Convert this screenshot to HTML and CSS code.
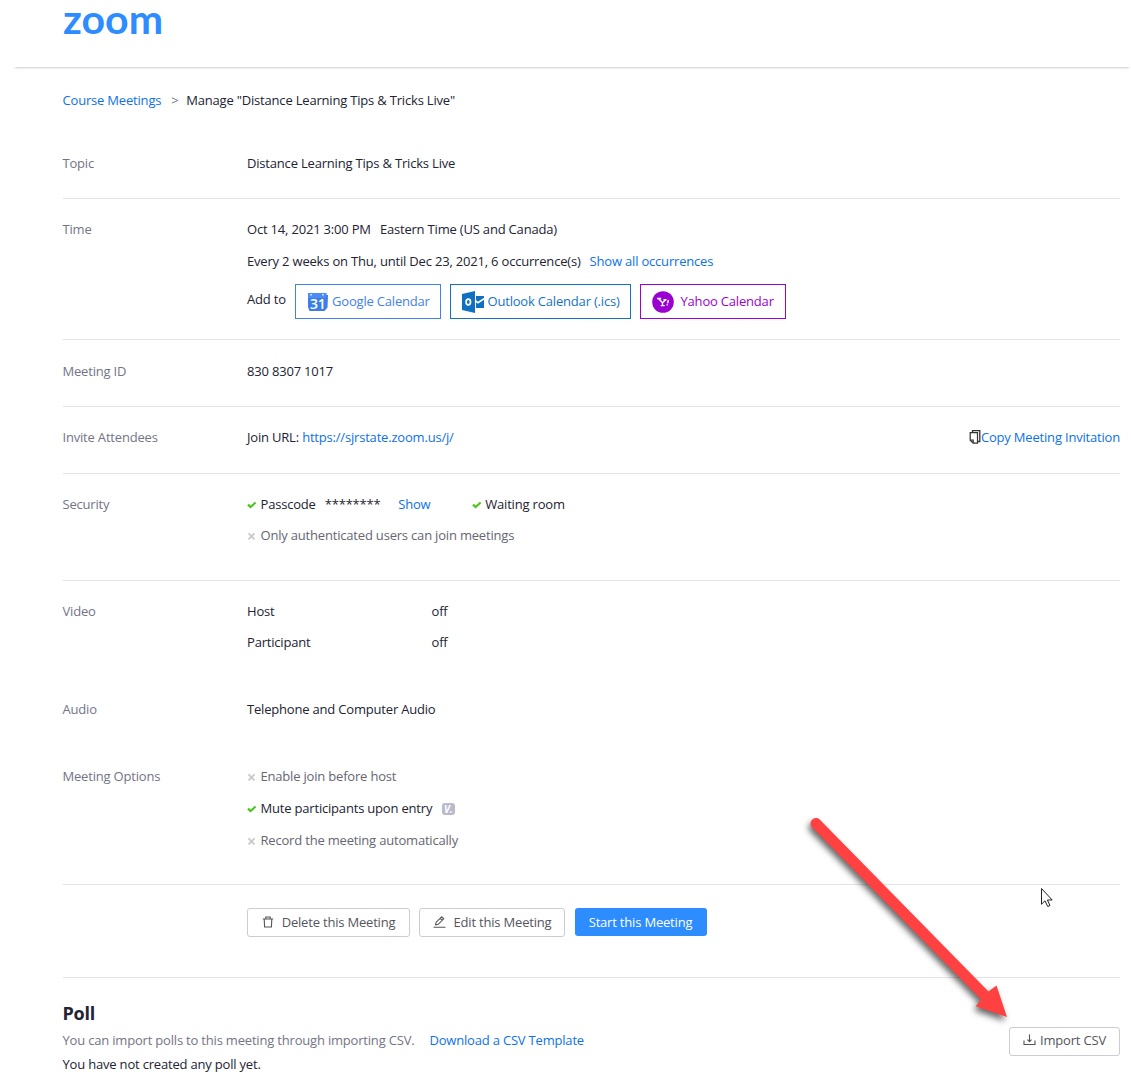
FILE: index.html
```html
<!DOCTYPE html>
<html lang="en">
<head>
<meta charset="UTF-8">
<meta name="viewport" content="width=device-width, initial-scale=1.0">
<title>Manage Meeting</title>
<link rel="stylesheet" href="styles.css">
</head>
<body>
<!-- Shared icons -->
<svg class="icon-defs" width="0" height="0">
<symbol id="check" viewBox="0 0 10 10"><path d="M1 4.600 L3.600 7 L8.600 2.500" fill="none" stroke="#4cc71c" stroke-width="2.200"/></symbol>
<symbol id="cross" viewBox="0 0 10 10"><path d="M1.500 2.300 L7.500 8.300 M7.500 2.300 L1.500 8.300" fill="none" stroke="#c8c8c8" stroke-width="1.700"/></symbol>
</svg>
<header class="header">
<svg class="logo" width="101" height="54" viewBox="0 0 101 54">
<text x="0" y="34" textLength="100" lengthAdjust="spacingAndGlyphs">zoom</text>
</svg>
</header>
<main class="content">
<nav class="breadcrumb">
<a href="#">Course Meetings</a>
<span class="arrow">&gt;</span>
<span>Manage "Distance Learning Tips &amp; Tricks Live"</span>
</nav>
<section class="row topic">
<div class="label">Topic</div>
<div class="value">Distance Learning Tips &amp; Tricks Live</div>
</section>
<section class="row time">
<div class="label">Time</div>
<div class="value">
<div class="line"><span class="date">Oct 14, 2021 3:00 PM</span><span>Eastern Time (US and Canada)</span></div>
<div class="line occurrences"><span class="repeat">Every 2 weeks on Thu, until Dec 23, 2021, 6 occurrence(s)</span><a href="#">Show all occurrences</a></div>
<div class="calendars">
<span class="add">Add to</span>
<a class="cal google" href="#">
<svg width="22" height="20" viewBox="0 0 22 20"><path d="M1 1h18.500v2H21l-.5 12.500-3 3.500H2.500L1 15z" fill="#3b7de9"/><path d="M1 1h18v5H1z" fill="#4c8bf5"/><path d="M4 2v1.500M16 2v1.500" stroke="#fff" stroke-width="1.300"/><text class="cal-day" x="3" y="16.500">31</text></svg>
<span>Google Calendar</span>
</a>
<a class="cal outlook" href="#">
<svg width="22" height="22" viewBox="0 0 22 22"><path d="M0 3L13 0v22L0 19z" fill="#0f70c1"/><path d="M14 5h8v12H14z" fill="#0f70c1"/><path d="M13 9.500l3 2.200 7-4.700" fill="none" stroke="#fff" stroke-width="1.600"/><ellipse cx="6.300" cy="11" rx="2.200" ry="2.900" fill="none" stroke="#fff" stroke-width="1.700"/></svg>
<span>Outlook Calendar (.ics)</span>
</a>
<a class="cal yahoo" href="#">
<svg width="22" height="22" viewBox="0 0 22 22"><circle cx="11" cy="11" r="10.800" fill="#9b00d3"/><path d="M5 7.500h4.200M6.500 7.500l4 4.200 3-2.700M11.500 8.800h3M10.500 11.500v3M8.700 14.600h4" fill="none" stroke="#fff" stroke-width="1.400"/><path d="M16.400 9l-.8 3.400M15.200 13.300v1.200" stroke="#fff" stroke-width="1.400"/></svg>
<span>Yahoo Calendar</span>
</a>
</div>
</div>
</section>
<section class="row meeting-id">
<div class="label">Meeting ID</div>
<div class="value">830 8307 1017</div>
</section>
<section class="row invite">
<div class="label">Invite Attendees</div>
<div class="value">Join URL: <a href="#">https://sjrstate.zoom.us/j/</a></div>
<a class="copy" href="#">
<svg width="12" height="14" viewBox="0 0 12 14"><path d="M3.500 2.500V.7h7.300v10.800H9" fill="none" stroke="#333" stroke-width="1.300"/><path d="M1.200 2.700h7.300v10.500H4.200l-3-3zM1.200 10h3v3" fill="#fff" stroke="#333" stroke-width="1.200"/></svg>
<span>Copy Meeting Invitation</span>
</a>
</section>
<section class="row security">
<div class="label">Security</div>
<div class="value">
<div class="line">
<svg class="mark"><use href="#check"/></svg><span>Passcode</span><span class="stars">********</span><a class="show" href="#">Show</a>
<svg class="mark"><use href="#check"/></svg><span>Waiting room</span>
</div>
<div class="line off second"><svg class="mark"><use href="#cross"/></svg><span>Only authenticated users can join meetings</span></div>
</div>
</section>
<section class="row video">
<div class="label">Video</div>
<div class="value">
<div class="line"><span class="setting">Host</span><span>off</span></div>
<div class="line second"><span class="setting">Participant</span><span>off</span></div>
</div>
</section>
<section class="row audio">
<div class="label">Audio</div>
<div class="value">Telephone and Computer Audio</div>
</section>
<section class="row options">
<div class="label">Meeting Options</div>
<div class="value option-list">
<div class="line off"><svg class="mark"><use href="#cross"/></svg><span>Enable join before host</span></div>
<div class="line"><svg class="mark"><use href="#check"/></svg><span>Mute participants upon entry</span><span class="badge">V.</span></div>
<div class="line off"><svg class="mark"><use href="#cross"/></svg><span>Record the meeting automatically</span></div>
</div>
</section>
<div class="actions">
<button class="btn delete">
<svg width="12" height="12" viewBox="0 0 12 12"><path d="M.8 3h10.400M3.800 3V1h4.400V3M2.200 3l.4 8h6.800l.4-8" fill="none" stroke="#555" stroke-width="1.100"/></svg>
<span>Delete this Meeting</span>
</button>
<button class="btn edit">
<svg width="13" height="12" viewBox="0 0 13 12"><path d="M.5 11.300h12M2.500 8.800L3.200 6.200 8.700.8l2 2L5.200 8.300zM7.200 2.300l2 2" fill="none" stroke="#555" stroke-width="1.100"/></svg>
<span>Edit this Meeting</span>
</button>
<button class="btn start">Start this Meeting</button>
</div>
<section class="poll">
<div>
<h2>Poll</h2>
<p class="hint"><span>You can import polls to this meeting through importing CSV.</span><a href="#">Download a CSV Template</a></p>
<p class="empty">You have not created any poll yet.</p>
</div>
<button class="btn import">
<svg width="13" height="12" viewBox="0 0 13 12"><path d="M1 6.500v4h11v-4M6.500.5v7M4.500 5.700l2 2 2-2" fill="none" stroke="#555" stroke-width="1.100"/></svg>
<span>Import CSV</span>
</button>
</section>
</main>
<!-- Pointer and callout arrow -->
<svg class="cursor" width="14" height="21" viewBox="0 0 14 21"><path d="M1.500 1.500v15.700l3.500-3.400 2.700 5.700 2.300-1-2.600-5.500h4.800z" fill="#fff" stroke="#222" stroke-width="1"/></svg>
<svg class="callout" width="220" height="220" viewBox="0 0 220 220"><path d="M19.700 9.500L188.500 181.600L196.500 175.500L207 207L175.800 196.200L181.200 189.600L12.300 17.500A5.300 5.300 0 0 1 19.700 9.500Z" fill="#ff4141"/></svg>
</body>
</html>
```
FILE: styles.css
```css
* {
    box-sizing: border-box;
}
body {
    margin: 0;
    height: 1079px;
    position: relative;
    overflow: hidden;
    background: #fff;
    color: #232333;
    font-family: "Open Sans", sans-serif;
    font-size: 13px;
    letter-spacing: -0.19px;
    line-height: 20px;
}
a {
    color: #0e71eb;
    text-decoration: none;
}
svg {
    display: block;
    flex: none;
}
.icon-defs {
    position: absolute;
}
.header {
    height: 67px;
    margin-left: 13px;
    padding-left: 49.5px;
    box-shadow: 0 3px 2px -2px #ccc;
}
.logo {
    overflow: visible;
}
.logo text {
    font-family: Lato, sans-serif;
    font-size: 41px;
    font-weight: bold;
    letter-spacing: 0;
    fill: #2d8cff;
}
.content {
    margin: 0 11px 0 62.5px;
}
.breadcrumb {
    display: flex;
    height: 66px;
    padding-top: 23px;
}
.breadcrumb .arrow {
    width: 25px;
    padding-left: 10px;
    color: #747487;
}
/* Detail rows */
.row {
    display: flex;
    padding-top: 20px;
    border-bottom: 1px solid #e4e4e8;
}
.label {
    width: 184.5px;
    color: #747487;
}
.value {
    flex: 1;
}
.line {
    display: flex;
    align-items: center;
    height: 20px;
}
.second {
    margin-top: 11px;
}
.topic {
    height: 66px;
}
.time {
    height: 141px;
}
.date {
    margin-right: 9px;
}
.occurrences {
    margin-top: 12px;
}
.repeat {
    margin-right: 9px;
}
.calendars {
    display: flex;
    margin-top: 13px;
}
.add {
    width: 48px;
    padding-top: 5px;
}
.cal {
    display: flex;
    align-items: center;
    height: 35px;
    margin-right: 9px;
    border: 1px solid;
    padding: 1px 0 0 11px;
    white-space: nowrap;
}
.google {
    width: 146px;
    color: #3f82ee;
}
.google span {
    margin: -2px 0 0 3px;
}
.cal-day {
    font-size: 14px;
    font-weight: 600;
    fill: #fff;
}
.outlook {
    width: 181px;
    color: #1474bf;
}
.outlook span {
    margin: -2px 0 0 3.5px;
}
.yahoo {
    width: 146px;
    color: #a000d0;
}
.yahoo span {
    margin: -2px 0 0 6.5px;
}
.meeting-id {
    height: 67px;
    padding-top: 21px;
}
.invite {
    height: 67px;
}
.copy {
    display: flex;
    align-items: center;
    height: 20px;
}
.security {
    height: 107px;
}
.mark {
    width: 10px;
    height: 10px;
    margin: 2px 3.5px 0 0;
}
.off {
    color: #666672;
}
.stars {
    width: 73.5px;
    margin-left: 9px;
}
.show {
    width: 73.5px;
}
.video {
    height: 98px;
    border: 0;
}
.setting {
    width: 184.5px;
}
.audio {
    height: 67px;
    border: 0;
}
.options {
    height: 139px;
}
.option-list {
    display: flex;
    flex-direction: column;
    gap: 12px;
}
.badge {
    width: 13px;
    height: 12px;
    margin: 2px 0 0 9.5px;
    border-radius: 3px;
    background: #babacc;
    color: #fff;
    font-size: 10px;
    font-style: italic;
    font-weight: bold;
    line-height: 12px;
    text-align: center;
}
.actions {
    display: flex;
    gap: 9px;
    height: 93px;
    padding: 23px 0 0 184.5px;
    border-bottom: 1px solid #e4e4e8;
}
.btn {
    display: flex;
    align-items: center;
    justify-content: center;
    gap: 8px;
    height: 29px;
    padding: 0 0 1px;
    border: 1px solid #ccccd4;
    border-radius: 3px;
    background: #fff;
    color: #555560;
    font: 13px/20px "Open Sans", sans-serif;
    letter-spacing: -0.19px;
    white-space: nowrap;
}
.delete {
    width: 163px;
}
.edit {
    width: 146px;
}
.start {
    width: 132px;
    height: 28px;
    margin-left: 0.5px;
    border: 0;
    background: #2d8cff;
    color: #fff;
}
.poll {
    display: flex;
    justify-content: space-between;
    padding-top: 23px;
}
.poll h2 {
    margin: 0;
    font-size: 18px;
    font-weight: 700;
    line-height: 24px;
}
.poll p {
    margin: 0;
}
.hint {
    display: flex;
    gap: 15px;
    padding-top: 5px;
    color: #747487;
}
.poll .empty {
    margin-top: 4px;
}
.import {
    width: 111px;
    gap: 4px;
    margin-top: 26px;
    padding-bottom: 3px;
}
.cursor {
    position: absolute;
    left: 1040px;
    top: 887px;
}
.callout {
    position: absolute;
    left: 800px;
    top: 810px;
    filter: drop-shadow(-2px 4px 3px rgba(0, 0, 0, 0.6));
}
```
